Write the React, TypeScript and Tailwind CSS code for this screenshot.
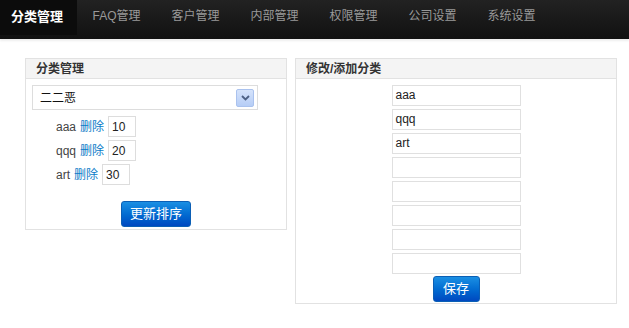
import React from "react"

const font = "font-['Liberation_Sans','Noto_Sans_CJK_SC',sans-serif]"

const navItems = ["FAQ管理", "客户管理", "内部管理", "权限管理", "公司设置", "系统设置"]

const orders = [
  { name: "aaa", value: "10" },
  { name: "qqq", value: "20" },
  { name: "art", value: "30" },
]

function BlueButton({ label, className }: { label: string; className: string }) {
  return (
    <button
      className={`h-[26px] rounded-[3px] border border-[#0b5fb5] bg-gradient-to-b from-[#1b8fe3] to-[#0048c0] text-[13px] text-white ${className}`}
    >
      {label}
    </button>
  )
}

export default function App() {
  return (
    <div className={`w-[629px] h-[328px] bg-white ${font} text-[12px] text-[#333]`}>
      {/* top nav */}
      <div className="h-[39px] flex bg-gradient-to-b from-[#222] to-[#111] shadow-[0_2px_2px_#eee]">
        <div className="w-[77px] h-[35px] bg-[#0c0c0c] pl-[11px] pt-[9px] text-[13px] font-bold leading-[15px] text-white">
          分类管理
        </div>
        {navItems.map((item) => (
          <div key={item} className="h-[35px] px-[15.5px] pt-[9px] leading-[15px] text-[#999]">
            {item}
          </div>
        ))}
      </div>

      <div className="flex items-start pt-[19px] pl-[25px] gap-[8px]">
        {/* left panel */}
        <div className="w-[262px] border border-[#e2e2e2]">
          <div className="h-[20px] bg-[#f4f4f4] border-b border-[#e2e2e2] pl-[10px] leading-[20px] font-bold text-[#333]">
            分类管理
          </div>
          <div className="px-[6px] pt-[6px] pb-[1px]">
            <div className="w-[226px] h-[25px] border border-[#ddd] flex items-center justify-between pl-[7px] pr-[3px] text-[#111]">
              <span>二二恶</span>
              <span className="w-[18px] h-[18px] rounded-[2px] bg-gradient-to-b from-[#d5e3fb] to-[#b6cdf6] border border-[#aac2ee] flex items-center justify-center">
                <svg width="9" height="6" viewBox="0 0 9 6">
                  <path d="M1 1 L4.5 4.5 L8 1" stroke="#4d6185" strokeWidth="1.8" fill="none" />
                </svg>
              </span>
            </div>
            <div className="flex flex-col gap-[3px] mt-[6px]">
              {orders.map((o) => (
                <div key={o.name} className="flex items-center pl-[24px]">
                  <span className="text-[#444]">{o.name}</span>
                  <span className="ml-[4px] text-[#0a7bc8]">删除</span>
                  <span className="ml-[4px] w-[28px] h-[21px] border border-[#ddd] pl-[3px] leading-[21px] text-[#222]">
                    {o.value}
                  </span>
                </div>
              ))}
            </div>
            <div className="flex justify-center pt-[16px] pb-[1px]">
              <BlueButton label="更新排序" className="w-[70px]" />
            </div>
          </div>
        </div>

        {/* right panel */}
        <div className="w-[322px] border border-[#e2e2e2]">
          <div className="h-[20px] bg-[#f4f4f4] border-b border-[#e2e2e2] pl-[10px] leading-[20px] font-bold text-[#333]">
            修改/添加分类
          </div>
          <div className="flex flex-col items-center pt-[6px] pb-[1px]">
            <div className="flex flex-col gap-[3px]">
              {["aaa", "qqq", "art", "", "", "", "", ""].map((v, i) => (
                <div key={i} className="w-[129px] h-[21px] border border-[#e0e0e0] pl-[3px] leading-[19px] text-[#222]">
                  {v}
                </div>
              ))}
            </div>
            <BlueButton label="保存" className="w-[47px] mt-[2px]" />
          </div>
        </div>
      </div>
    </div>
  )
}
